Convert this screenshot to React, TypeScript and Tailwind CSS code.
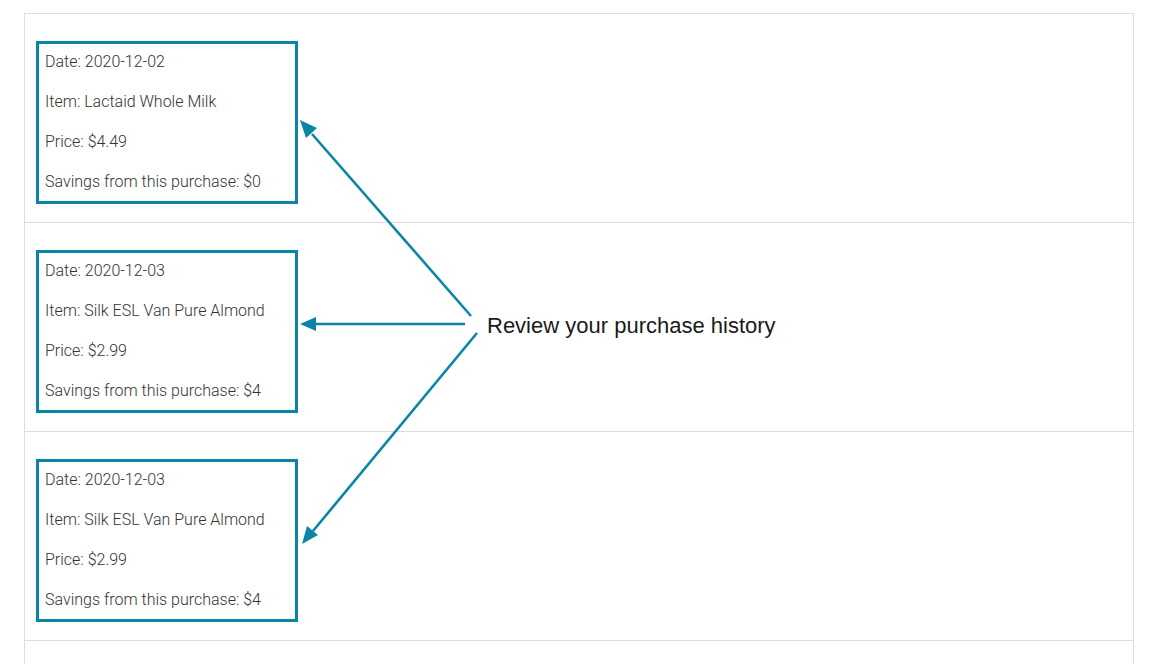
import React from "react";

type Purchase = { date: string; item: string; price: string; savings: string };

const purchases: Purchase[] = [
  { date: "2020-12-02", item: "Lactaid Whole Milk", price: "$4.49", savings: "$0" },
  { date: "2020-12-03", item: "Silk ESL Van Pure Almond", price: "$2.99", savings: "$4" },
  { date: "2020-12-03", item: "Silk ESL Van Pure Almond", price: "$2.99", savings: "$4" },
];

function Row({ p }: { p: Purchase }) {
  return (
    <div className="border-b border-[#dedede] pt-[27px] pb-[18px] pl-[11px]">
      <div className="w-[262px] h-[163px] border-[3px] border-[#0a85a8] pl-[6px] pt-[8px] text-[16px] font-light text-[#333] leading-[20px] flex flex-col gap-[20px]" style={{ fontFamily: "Roboto, 'Liberation Sans', sans-serif" }}>
        <p>Date: {p.date}</p>
        <p>Item: {p.item}</p>
        <p>Price: {p.price}</p>
        <p>Savings from this purchase: {p.savings}</p>
      </div>
    </div>
  );
}

export default function App() {
  const c = "#0a85a8";
  return (
    <div className="bg-white w-[1159px] h-[664px] overflow-hidden pt-[13px] pl-[24px]">
      <div className="relative w-[1110px] border border-[#dedede] border-b-0 h-[700px]">
        {purchases.map((p, i) => (
          <Row key={i} p={p} />
        ))}
        <svg className="absolute left-[-25px] top-[-14px]" width="1159" height="664" viewBox="0 0 1159 664">
          <line x1="471" y1="316" x2="312" y2="134" stroke={c} strokeWidth="2.6" />
          <polygon points="300,120 317,128 306,138" fill={c} />
          <line x1="465" y1="324" x2="314" y2="324" stroke={c} strokeWidth="2.6" />
          <polygon points="300,324 316,317 316,331" fill={c} />
          <line x1="477" y1="333" x2="313" y2="531" stroke={c} strokeWidth="2.6" />
          <polygon points="302,544 307,526 318,535" fill={c} />
        </svg>
        <div className="absolute left-[462px] top-[299px] text-[22px] leading-[26px] text-[#1a1a1a]" style={{ fontFamily: "'Liberation Sans', Arial, sans-serif" }}>
          Review your purchase history
        </div>
      </div>
    </div>
  );
}
